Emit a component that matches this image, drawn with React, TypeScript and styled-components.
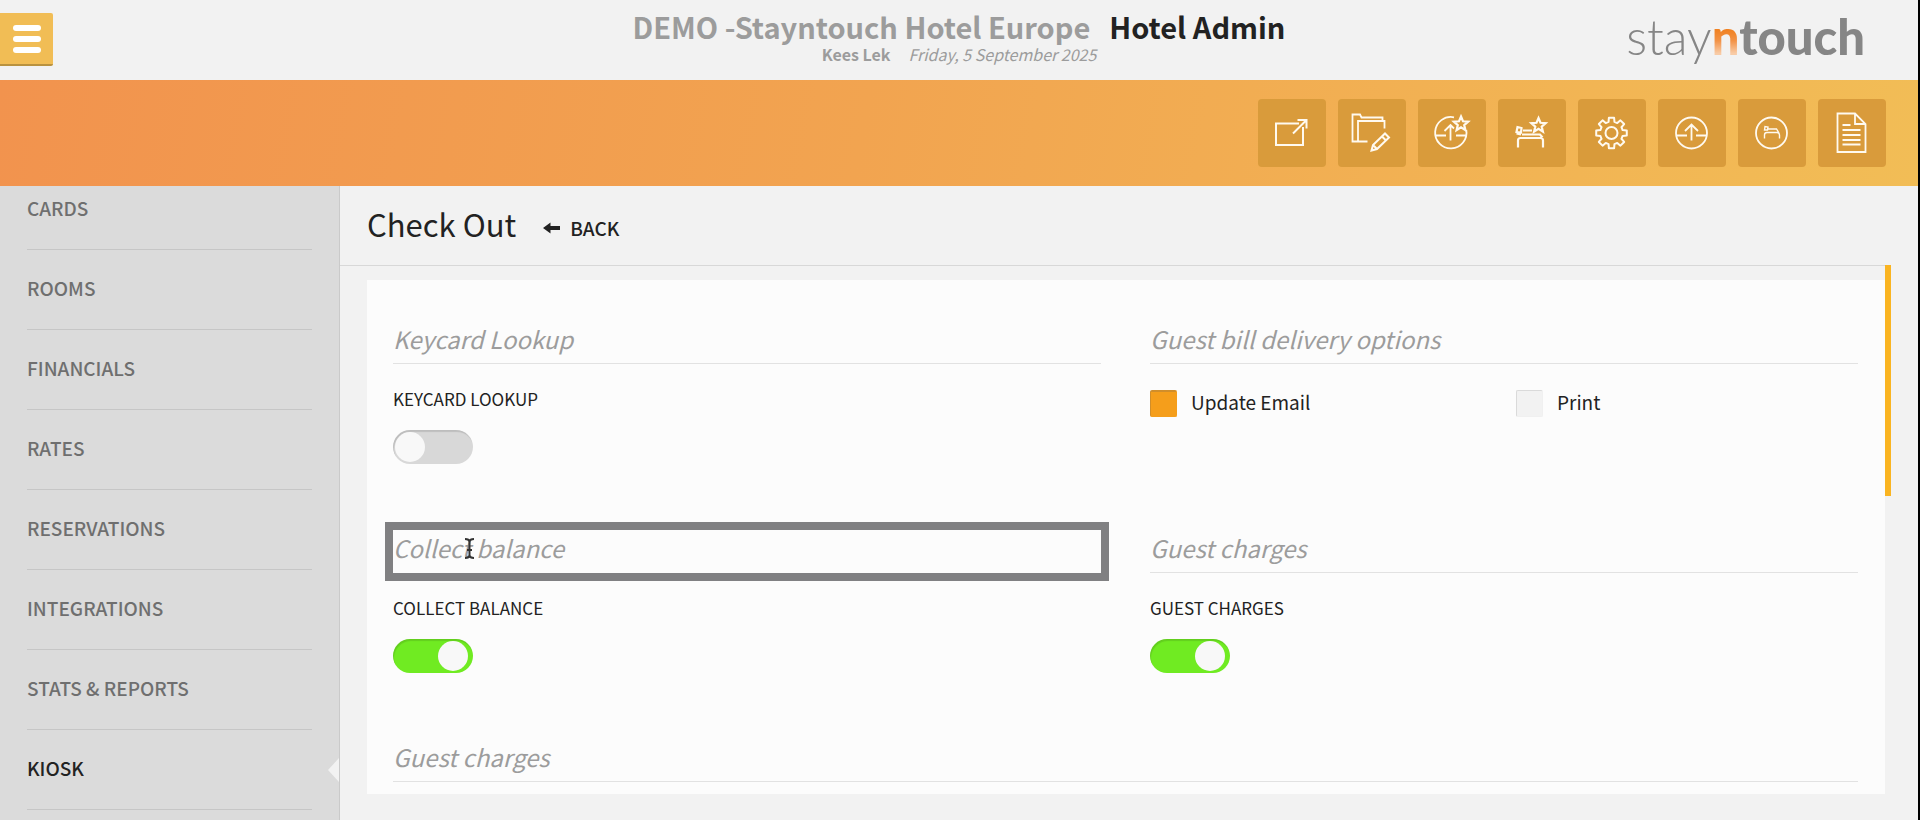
import React from "react";
import styled, { createGlobalStyle, css } from "styled-components";

const GlobalStyle = createGlobalStyle`
  *, *::before, *::after { box-sizing: border-box; }
  body {
    margin: 0;
    background: #f2f2f2;
    color: #222;
    font-family: "Noto Sans CJK SC", "Noto Sans", sans-serif;
  }
  h1, h2, p, ul { margin: 0; padding: 0; font-weight: 400; }
  button, input { font: inherit; margin: 0; }
`;

const Shell = styled.div`
  display: flex;
  flex-direction: column;
  min-height: 100vh;
  border-right: 2px solid #000;
`;

/* ---------- top header ---------- */

const TopBar = styled.header`
  display: grid;
  grid-template-columns: 1fr auto 1fr;
  height: 80px;
`;

const MenuButton = styled.button`
  display: flex;
  flex-direction: column;
  justify-content: center;
  align-items: center;
  gap: 5px;
  width: 53px;
  height: 53px;
  margin-top: 13px;
  padding: 0;
  border: 0;
  border-bottom: 2px solid #b9923f;
  border-radius: 0 2px 2px 0;
  background: #f1bd55;
`;

const MenuBar = styled.span`
  width: 28px;
  height: 6px;
  border-radius: 3px;
  background: #fff;
`;

const Titles = styled.div`
  display: flex;
  flex-direction: column;
  align-items: center;
  padding-top: 8px;
  white-space: nowrap;
`;

const HotelTitle = styled.h1`
  display: flex;
  gap: 19px;
  font-size: 29px;
  line-height: 36px;
  font-weight: 700;
  color: #9c9c9c;
`;

const SectionName = styled.span`
  color: #222;
`;

const SubTitle = styled.p`
  display: flex;
  gap: 18px;
  font-size: 16px;
  line-height: 20px;
  color: #9c9c9c;
`;

const Brand = styled.div`
  justify-self: end;
  margin-right: 53px;
  padding-top: 6px;
  font-family: Lato, sans-serif;
  font-size: 49px;
  line-height: 60px;
  font-weight: 300;
  color: #868686;
`;

const BrandN = styled.span`
  font-weight: 900;
  background: linear-gradient(#f08223 40%, #f29246 58%, #f8cba6 80%);
  -webkit-background-clip: text;
  background-clip: text;
  color: transparent;
`;

const BrandTouch = styled.span`
  font-weight: 900;
`;

/* ---------- tool bar ---------- */

const ToolBar = styled.nav`
  display: flex;
  justify-content: flex-end;
  align-items: center;
  gap: 12px;
  height: 106px;
  padding-right: 32px;
  background: linear-gradient(100deg, #f2934e, #f2a450 45%, #f2bd56);
`;

const ToolButton = styled.button`
  width: 68px;
  height: 68px;
  padding: 0;
  border: 0;
  border-radius: 4px;
  background: #d99b3b;
`;

const ToolIcon = styled.svg`
  display: block;
  width: 68px;
  height: 68px;
  fill: none;
  stroke: #fffaf0;
  stroke-width: 1.8;
`;

/* ---------- side navigation ---------- */

const Body = styled.div`
  display: flex;
  flex: 1;
`;

const SideNav = styled.nav`
  flex: 0 0 340px;
  overflow: hidden;
  padding-left: 27px;
  background: #dbdbdb;
  border-right: 1px solid #cacaca;
`;

/* the list is scrolled a little, so its first row is cut off */
const NavList = styled.ul`
  margin-top: -16px;
  list-style: none;
`;

const NavItem = styled.li<{ $active?: boolean }>`
  position: relative;
  padding-right: 27px;
  ${({ $active }) =>
    $active &&
    css`
      &::after {
        content: "";
        position: absolute;
        top: 27px;
        right: -1px;
        border: 13px solid transparent;
        border-left-width: 0;
        border-right: 12px solid #f2f2f2;
      }
    `}
`;

const NavLink = styled.a<{ $active?: boolean }>`
  display: flex;
  align-items: center;
  height: 80px;
  padding-bottom: 4px;
  border-bottom: 1px solid #c6c6c6;
  color: ${({ $active }) => ($active ? "#222" : "#6f6f6f")};
  font-size: 19px;
  line-height: 24px;
  font-weight: 500;
  text-decoration: none;
`;

/* ---------- content ---------- */

const Content = styled.main`
  flex: 1;
  min-width: 0;
`;

const PageHead = styled.div`
  display: flex;
  align-items: center;
  gap: 27px;
  height: 80px;
  margin-right: 33px;
  padding: 0 0 4px 27px;
  border-bottom: 1px solid #d8d8d8;
`;

const PageTitle = styled.h2`
  font-size: 31px;
  line-height: 40px;
`;

const BackLink = styled.a`
  display: flex;
  align-items: center;
  gap: 10px;
  padding-top: 8px;
  color: #222;
  font-size: 19px;
  line-height: 24px;
  font-weight: 500;
  text-decoration: none;
`;

const ScrollArea = styled.div`
  position: relative;
  padding: 14px 33px 27px 27px;
`;

const ScrollThumb = styled.div`
  position: absolute;
  top: -1px;
  right: 27px;
  width: 6px;
  height: 231px;
  background: #fab421;
`;

const Panel = styled.form`
  display: grid;
  grid-template-columns: 1fr 1fr;
  column-gap: 49px;
  padding: 41px 27px 12px 26px;
  background: #fcfcfc;
`;

const Section = styled.section<{ $wide?: boolean }>`
  ${({ $wide }) => ($wide ? "grid-column: 1 / -1;" : "height: 209px;")}
`;

const SectionHeading = styled.h2<{ $focused?: boolean }>`
  position: relative;
  height: 43px;
  border-bottom: 1px solid #e2e2e2;
  color: #9c9c9c;
  font-size: 24px;
  line-height: 36px;
  font-style: italic;
  font-weight: 400;
  ${({ $focused }) =>
    $focused &&
    css`
      border-bottom-color: transparent;
      outline: 8px solid #808082;
    `}
`;

const TextCursor = styled.svg`
  position: absolute;
  top: 8px;
  left: 71px;
  width: 11px;
  height: 21px;
  fill: none;
  stroke: #333;
  stroke-width: 2;
`;

const SwitchField = styled.label`
  display: flex;
  flex-direction: column;
  align-items: flex-start;
  gap: 19px;
  padding-top: 23px;
  font-size: 17px;
  line-height: 24px;
`;

const Switch = styled.input`
  appearance: none;
  width: 80px;
  height: 34px;
  padding: 2px 5px 2px 2px;
  border-radius: 17px;
  background: #d8d8d8;
  box-shadow: inset 1px 2px 1px rgba(0, 0, 0, 0.12);
  &::before {
    content: "";
    display: block;
    width: 30px;
    height: 30px;
    border-radius: 50%;
    background: #f8f8f8;
  }
  &:checked {
    background: #70eb22;
  }
  &:checked::before {
    margin-left: auto;
  }
`;

const Options = styled.div`
  display: grid;
  grid-template-columns: 1fr 1fr;
  column-gap: 24px;
  padding-top: 26px;
`;

const Option = styled.label`
  display: flex;
  align-items: flex-start;
  gap: 14px;
  font-size: 19px;
  line-height: 24px;
`;

const Tick = styled.input`
  appearance: none;
  width: 27px;
  height: 27px;
  border: 1px solid #f0f0f0;
  border-top-color: #dadada;
  border-left-color: #dadada;
  border-radius: 2px;
  background: #f2f2f2;
  &:checked {
    background: #f59e1b;
    border-color: #f59e1b;
    border-top: 2px solid #d18e2a;
    border-left-color: #d18e2a;
  }
`;

/* ---------- icon drawings, on a 68 unit square ---------- */

const starPath = (cx: number, cy: number, r: number) => {
  const pts = Array.from({ length: 10 }, (_, i) => {
    const radius = i % 2 ? r * 0.45 : r;
    const a = (Math.PI / 5) * i - Math.PI / 2;
    return `${(cx + radius * Math.cos(a)).toFixed(2)} ${(cy + radius * Math.sin(a)).toFixed(2)}`;
  });
  return `M${pts.join("L")}Z`;
};

const gearPath = (cx: number, cy: number) => {
  const pts: string[] = [];
  for (let i = 0; i < 8; i++) {
    const a = (Math.PI / 4) * i;
    [
      [11.5, -0.26],
      [15.5, -0.17],
      [15.5, 0.17],
      [11.5, 0.26],
    ].forEach(([r, d]) => {
      pts.push(`${(cx + r * Math.sin(a + d)).toFixed(2)} ${(cy - r * Math.cos(a + d)).toFixed(2)}`);
    });
  }
  return `M${pts.join("L")}Z`;
};

const tools: { name: string; art: React.ReactNode }[] = [
  {
    name: "Open in new window",
    art: <path strokeWidth="2" d="M41 24.5H18V46H45V28M35 34.5L48.5 21M39.500 21h9v8.500" />,
  },
  {
    name: "Edit folder",
    art: (
      <>
        <path d="M29.500 42.500h-15V15.500h7.500l1.500 3H44.500V22M20 42V22h26.500v7.500" />
        <path
          strokeWidth="2"
          d="M33.500 51.500l1.500-5.500L47 34.500l4 4L39 50zM35 46l4 4M44 37.500l4 4"
        />
      </>
    ),
  },
  {
    name: "Featured upload",
    art: (
      <>
        <path d="M36 18.300A15.700 15.700 0 1 0 48.300 31M17.500 36.500H28M38 36.500h10.300M32.500 41.500V26M26.500 32l6-6 3.500 3.500" />
        <path strokeWidth="2.200" d={starPath(43, 25, 7.5)} />
      </>
    ),
  },
  {
    name: "Featured room",
    art: (
      <>
        <path
          strokeWidth="2.200"
          d="M20 48.500V41.500q0-2.500 2.500-2.500h20q2.500 0 2.500 2.500v7M24 35.500h18l2.500 3M18.500 33l1-5 4 1-.5 4.500zM18.500 34.500l4.500 1M25 31.500h9"
        />
        <path strokeWidth="2.200" d={starPath(40.5, 26.5, 7.5)} />
      </>
    ),
  },
  {
    name: "Settings",
    art: (
      <>
        <path strokeWidth="2" strokeLinejoin="round" d={gearPath(33.5, 34)} />
        <circle cx="33.500" cy="34" r="6" strokeWidth="2" />
      </>
    ),
  },
  {
    name: "Upload",
    art: (
      <>
        <circle cx="33.500" cy="34" r="15.500" />
        <path d="M18 36.500h11M38 36.500h11M33.500 41.500V26M27 32l6.500-6.500L40 32" />
      </>
    ),
  },
  {
    name: "Rooms",
    art: (
      <>
        <circle cx="33.500" cy="34" r="15.500" />
        <path
          strokeWidth="1.400"
          d="M26.500 39.500v-3.500q0-2.500 2.500-2.500h10q2.500 0 2.500 2.500v3.500M26.500 31l.5-3.500 3 .5-.5 3zM30 30h8.500l2.500 4"
        />
      </>
    ),
  },
  {
    name: "Report",
    art: (
      <path d="M37 14.500H19.500v38.500h28V25zV25H47.500M24.500 26h8M24.500 31h18M24.500 36h18M24.500 41h18M24.500 45.500h18" />
    ),
  },
];

const navItems = ["CARDS", "ROOMS", "FINANCIALS", "RATES", "RESERVATIONS", "INTEGRATIONS", "STATS & REPORTS", "KIOSK"];

function SwitchRow({ label, on }: { label: string; on?: boolean }) {
  return (
    <SwitchField>
      {label}
      <Switch type="checkbox" role="switch" defaultChecked={on} />
    </SwitchField>
  );
}

export default function App() {
  return (
    <>
      <GlobalStyle />
      <Shell>
        <TopBar>
          <MenuButton type="button" aria-label="Menu">
            <MenuBar />
            <MenuBar />
            <MenuBar />
          </MenuButton>
          <Titles>
            <HotelTitle>
              DEMO -Stayntouch Hotel Europe <SectionName>Hotel Admin</SectionName>
            </HotelTitle>
            <SubTitle>
              <b>Kees Lek</b>
              <i>Friday, 5 September 2025</i>
            </SubTitle>
          </Titles>
          <Brand>
            stay<BrandN>n</BrandN>
            <BrandTouch>touch</BrandTouch>
          </Brand>
        </TopBar>

        <ToolBar aria-label="Quick actions">
          {tools.map(({ name, art }) => (
            <ToolButton key={name} type="button" aria-label={name}>
              <ToolIcon viewBox="0 0 68 68">{art}</ToolIcon>
            </ToolButton>
          ))}
        </ToolBar>

        <Body>
          <SideNav aria-label="Admin sections">
            <NavList>
              {navItems.map((item) => (
                <NavItem key={item} $active={item === "KIOSK"}>
                  <NavLink href="#" $active={item === "KIOSK"}>
                    {item}
                  </NavLink>
                </NavItem>
              ))}
            </NavList>
          </SideNav>

          <Content>
            <PageHead>
              <PageTitle>Check Out</PageTitle>
              <BackLink href="#">
                <svg width="17" height="13" viewBox="0 0 17 13" fill="#222" aria-hidden="true">
                  <path d="M0 7L7.500 1.500V5H17v4H7.500v3.500z" />
                </svg>
                BACK
              </BackLink>
            </PageHead>

            <ScrollArea>
              <ScrollThumb />
              <Panel>
                <Section>
                  <SectionHeading>Keycard Lookup</SectionHeading>
                  <SwitchRow label="KEYCARD LOOKUP" />
                </Section>
                <Section>
                  <SectionHeading>Guest bill delivery options</SectionHeading>
                  <Options>
                    <Option>
                      <Tick type="checkbox" defaultChecked />
                      Update Email
                    </Option>
                    <Option>
                      <Tick type="checkbox" />
                      Print
                    </Option>
                  </Options>
                </Section>
                <Section>
                  <SectionHeading $focused>
                    Collect balance
                    <TextCursor viewBox="0 0 11 21" aria-hidden="true">
                      <path d="M1 1q4 0 4.500 2.500Q6 1 10 1M5.500 3v15M1 20q4 0 4.500-2.500Q6 20 10 20M3 12h5" />
                    </TextCursor>
                  </SectionHeading>
                  <SwitchRow label="COLLECT BALANCE" on />
                </Section>
                <Section>
                  <SectionHeading>Guest charges</SectionHeading>
                  <SwitchRow label="GUEST CHARGES" on />
                </Section>
                <Section $wide>
                  <SectionHeading>Guest charges</SectionHeading>
                </Section>
              </Panel>
            </ScrollArea>
          </Content>
        </Body>
      </Shell>
    </>
  );
}
